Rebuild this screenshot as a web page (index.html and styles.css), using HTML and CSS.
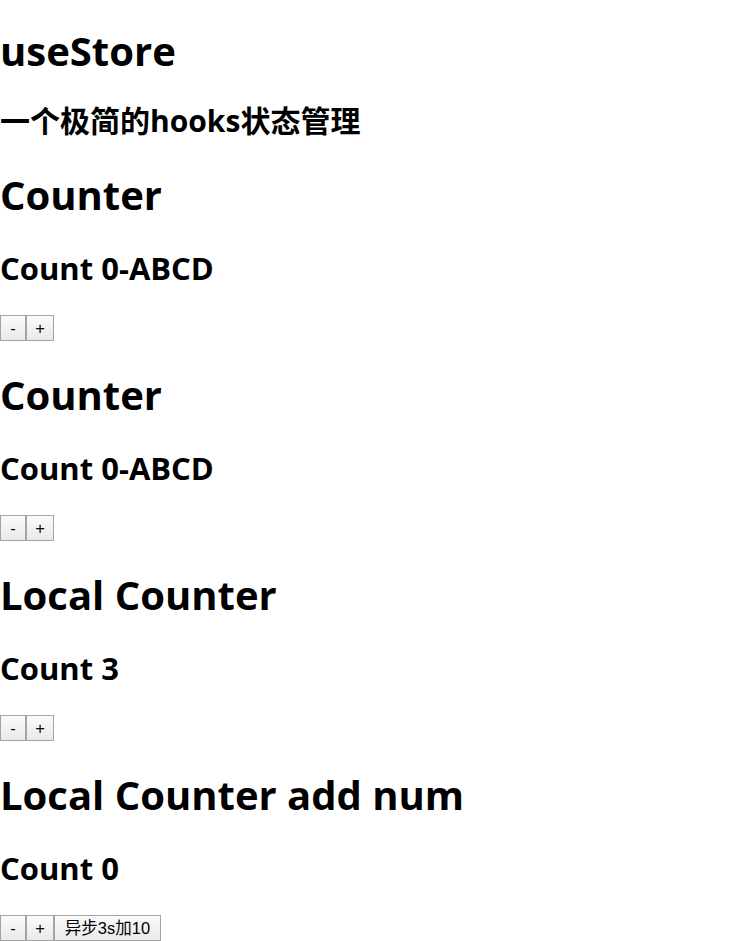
FILE: index.html
```html
<!DOCTYPE html>
<html lang="zh">
<head>
<meta charset="utf-8">
<title>useStore</title>
<link rel="stylesheet" href="styles.css">
</head>
<body>
<header class="intro">
  <h1 class="title">useStore</h1>
  <h2 class="subtitle">一个极简的hooks状态管理</h2>
</header>
<section class="counter">
  <h1 class="counter-title">Counter</h1>
  <h2 class="counter-count">Count 0-ABCD</h2>
  <div class="actions"><button class="btn btn-minus">-</button><button class="btn btn-plus">+</button></div>
</section>
<section class="counter">
  <h1 class="counter-title">Counter</h1>
  <h2 class="counter-count">Count 0-ABCD</h2>
  <div class="actions"><button class="btn btn-minus">-</button><button class="btn btn-plus">+</button></div>
</section>
<section class="counter">
  <h1 class="counter-title">Local Counter</h1>
  <h2 class="counter-count">Count 3</h2>
  <div class="actions"><button class="btn btn-minus">-</button><button class="btn btn-plus">+</button></div>
</section>
<section class="counter">
  <h1 class="counter-title">Local Counter add num</h1>
  <h2 class="counter-count">Count 0</h2>
  <div class="actions"><button class="btn btn-minus">-</button><button class="btn btn-plus">+</button><button class="btn btn-async">异步3s加10</button></div>
</section>
</body>
</html>
```
FILE: styles.css
```css
html, body {
  margin: 0;
  padding: 0;
  background: #ffffff;
  color: #000000;
}
body {
  font-family: "Open Sans", "Noto Sans CJK SC", sans-serif;
}
.intro {
  display: block;
}
.title {
  font-size: 40px;
  line-height: 48px;
  font-weight: 700;
  margin: 27px 0 0;
}
.subtitle {
  font-size: 30px;
  line-height: 40px;
  font-weight: 700;
  margin: 26px 0 0;
}
.counter-title {
  font-size: 40px;
  line-height: 54px;
  font-weight: 700;
  margin: 27px 0 0;
}
.counter-count {
  font-size: 31px;
  line-height: 40px;
  font-weight: 700;
  margin: 26px 0 0;
}
.actions {
  display: flex;
  margin-top: 27px;
  height: 26px;
}
.btn {
  font-family: "Liberation Sans", "Noto Sans CJK SC", sans-serif;
  font-size: 16.5px;
  height: 26px;
  padding: 0;
  margin: 0;
  border: 1px solid #a3a3a3;
  border-radius: 0;
  background: linear-gradient(#fbfbfb, #e9e9e9);
  color: #000;
  line-height: 22px;
}
.btn-minus { width: 26px; }
.btn-plus { width: 28px; }
.btn-async { width: 107px; }
```
